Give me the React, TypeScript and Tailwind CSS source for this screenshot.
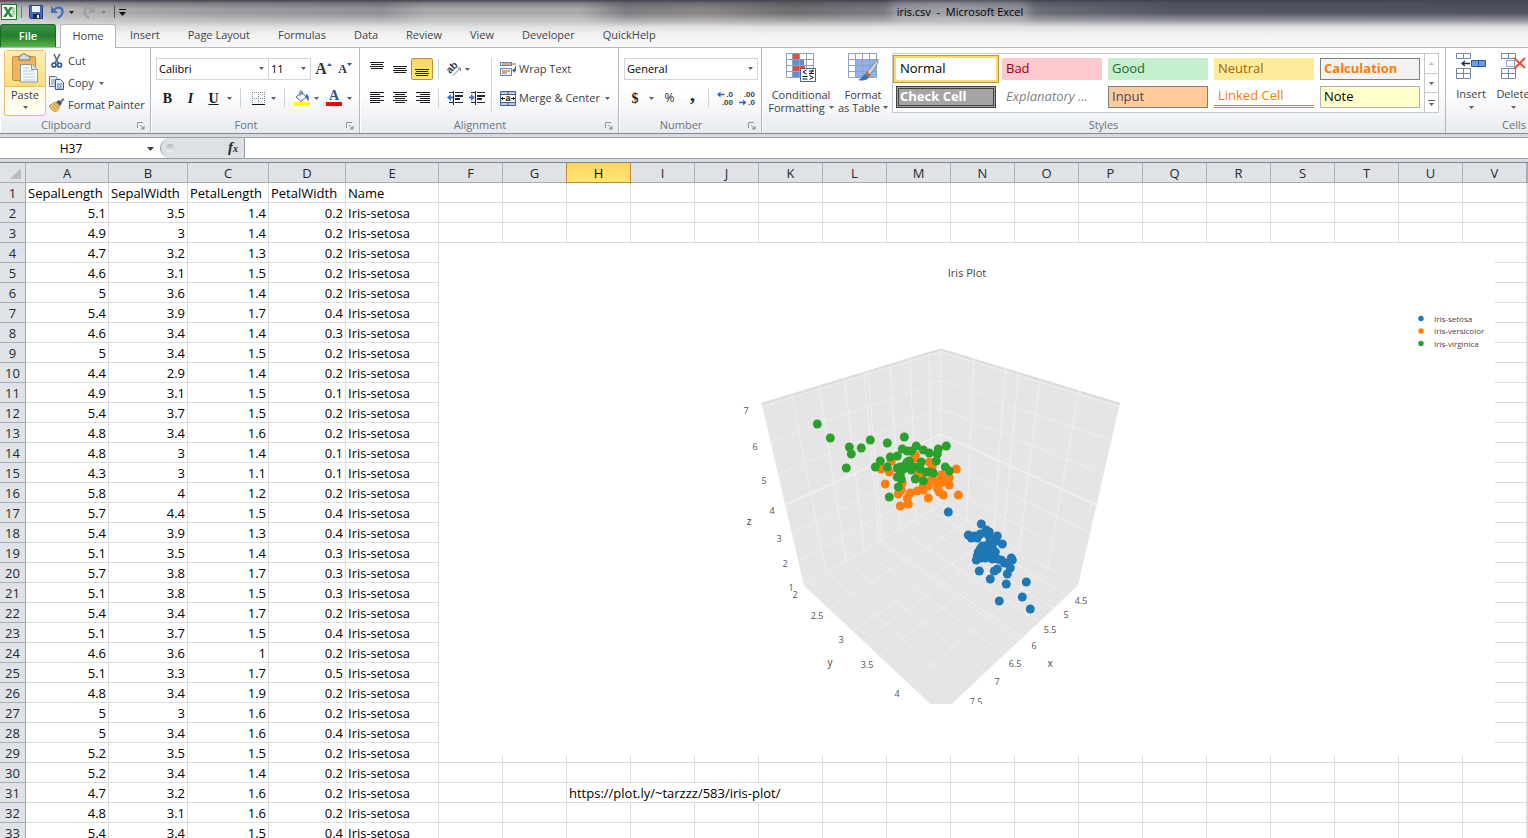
import React from 'react';
import { clsx } from 'clsx';

type IrisRow = [number, number, number, number];

const IRIS: IrisRow[] = [
  [5.1, 3.5, 1.4, 0.2],
  [4.9, 3, 1.4, 0.2],
  [4.7, 3.2, 1.3, 0.2],
  [4.6, 3.1, 1.5, 0.2],
  [5, 3.6, 1.4, 0.2],
  [5.4, 3.9, 1.7, 0.4],
  [4.6, 3.4, 1.4, 0.3],
  [5, 3.4, 1.5, 0.2],
  [4.4, 2.9, 1.4, 0.2],
  [4.9, 3.1, 1.5, 0.1],
  [5.4, 3.7, 1.5, 0.2],
  [4.8, 3.4, 1.6, 0.2],
  [4.8, 3, 1.4, 0.1],
  [4.3, 3, 1.1, 0.1],
  [5.8, 4, 1.2, 0.2],
  [5.7, 4.4, 1.5, 0.4],
  [5.4, 3.9, 1.3, 0.4],
  [5.1, 3.5, 1.4, 0.3],
  [5.7, 3.8, 1.7, 0.3],
  [5.1, 3.8, 1.5, 0.3],
  [5.4, 3.4, 1.7, 0.2],
  [5.1, 3.7, 1.5, 0.4],
  [4.6, 3.6, 1, 0.2],
  [5.1, 3.3, 1.7, 0.5],
  [4.8, 3.4, 1.9, 0.2],
  [5, 3, 1.6, 0.2],
  [5, 3.4, 1.6, 0.4],
  [5.2, 3.5, 1.5, 0.2],
  [5.2, 3.4, 1.4, 0.2],
  [4.7, 3.2, 1.6, 0.2],
  [4.8, 3.1, 1.6, 0.2],
  [5.4, 3.4, 1.5, 0.4],
];

const HEADINGS = ['SepalLength', 'SepalWidth', 'PetalLength', 'PetalWidth', 'Name'];
const LETTERS = 'ABCDEFGHIJKLMNOPQRSTUV'.split('');
const EMPTY_COLUMNS = LETTERS.slice(5);
const ACTIVE_COLUMN = 'H';
const LINK_ROW = 31;

const TABS = ['Insert', 'Page Layout', 'Formulas', 'Data', 'Review', 'View', 'Developer', 'QuickHelp'];

/* ---------- small shared pieces ---------- */

const Caret = ({ className = 'text-[#5c5f63]' }: { className?: string }) => (
  <svg width="5" height="3" viewBox="0 0 5 3" className={clsx('shrink-0', className)} aria-hidden="true">
    <path d="M0 0h5L2.500 3z" fill="currentColor" />
  </svg>
);

const Divider = () => <span className="h-5 w-px shrink-0 bg-[#d0d4d9]" />;

interface ToolProps {
  label: string;
  className?: string;
  children: React.ReactNode;
}

const Tool = ({ label, className, children }: ToolProps) => (
  <button type="button" aria-label={label} className={clsx('flex h-[22px] shrink-0 items-center justify-center', className)}>
    {children}
  </button>
);

interface ComboProps {
  label: string;
  value: string;
  className: string;
}

const Combo = ({ label, value, className }: ComboProps) => (
  <div className={clsx('relative h-[22px] shrink-0', className)}>
    <select
      aria-label={label}
      defaultValue={value}
      className="block h-full w-full appearance-none border border-[#d3d6d9] bg-white pl-[2px] text-[11px] leading-5 text-black"
    >
      <option>{value}</option>
    </select>
    <Caret className="pointer-events-none absolute right-[5px] top-[9px] text-[#5c5f63]" />
  </div>
);

interface GroupProps {
  title: string;
  className: string;
  launcher?: boolean;
  children: React.ReactNode;
}

const Group = ({ title, className, launcher = true, children }: GroupProps) => (
  <section className={clsx('flex flex-col border-r border-[#b5b9be] shadow-[inset_1px_0_0_#ffffff]', className)}>
    <div className="h-[69px]">{children}</div>
    <div className={clsx('relative flex h-4 items-center justify-center text-[11px] text-[#6a7280]', launcher && 'pr-[18px]')}>
      {title}
      {launcher && (
        <button type="button" aria-label={`${title} settings`} className="absolute right-[5px] top-[5px]">
          <svg width="8" height="8" viewBox="0 0 8 8" fill="none" stroke="#8e949b">
            <path d="M.5 6V.5H6M3 3l3 3" />
            <path d="M7.500 3.500v4h-4z" fill="#8e949b" stroke="none" />
          </svg>
        </button>
      )}
    </div>
  </section>
);

/* ---------- title bar ---------- */

const TitleBar = () => (
  <header className="flex h-6 items-center">
    <div className="flex w-[392px] shrink-0 items-center pl-[1px]">
      <svg width="16" height="16" viewBox="0 0 16 16" aria-label="Excel" role="img">
        <rect x=".5" y=".5" width="15" height="15" fill="#f4faf2" stroke="#1c7a33" />
        <path d="M11 3h3v10h-3z" fill="#d6e8d2" />
        <path d="M11 5h3M11 7.500h3M11 10h3" stroke="#7db582" />
        <path d="M2.500 3h3L7 6l2-3h3L8.500 8l3.500 5H9L7 10l-2 3H2l3.500-5z" fill="#1f8a3b" />
      </svg>
      <span className="ml-[4px] h-3 w-px bg-[#77797c]" />
      <button type="button" aria-label="Save" className="ml-[7px]">
        <svg width="14" height="14" viewBox="0 0 14 14">
          <path d="M.5.5h13v13h-12l-1-1z" fill="#4467b8" stroke="#26407f" />
          <path d="M3 1h8v6H3z" fill="#eef3fb" />
          <path d="M4 9h7v4.500H4z" fill="#1d2c57" />
          <path d="M8 10h2v3H8z" fill="#eef3fb" />
        </svg>
      </button>
      <button type="button" aria-label="Undo" className="ml-[8px] flex items-center">
        <svg width="13" height="14" viewBox="0 0 13 14" fill="none">
          <path d="M3 5c3-4 9-3 8.500 2C11.300 10 9 12 6.500 13" stroke="#3f6fc0" strokeWidth="2.200" />
          <path d="M0 1v7h7z" fill="#3f6fc0" />
        </svg>
        <Caret className="ml-[5px] text-[#1c1c1c]" />
      </button>
      <button type="button" aria-label="Redo" className="ml-[9px] flex items-center">
        <svg width="12" height="14" viewBox="0 0 12 14" fill="none">
          <path d="M9 5C6 1 1 3 1.500 7 2 10 4 12 6 13" stroke="#9b9da0" strokeWidth="2" />
          <path d="M12 1v7H5z" fill="#9b9da0" />
        </svg>
        <Caret className="ml-[6px] text-[#808285]" />
      </button>
      <span className="ml-[8px] h-3 w-px bg-[#4b4d50]" />
      <button type="button" aria-label="Customize Quick Access Toolbar" className="ml-[4px]">
        <svg width="7" height="7" viewBox="0 0 7 7">
          <path d="M0 0h7v1H0zM0 3h7L3.500 7z" fill="#111" />
        </svg>
      </button>
    </div>
    <h1 className="flex-1 text-center text-[11px] text-black">
      <span className="whitespace-pre rounded-full bg-white/20 px-1 shadow-[0_0_8px_4px_rgba(255,255,255,0.2)]">iris.csv  -  Microsoft Excel</span>
    </h1>
  </header>
);

const TabStrip = () => (
  <nav className="flex h-[23px] items-end text-[11px] text-[#3f4348]" aria-label="Ribbon tabs">
    <button
      type="button"
      className="mr-[4px] h-[23px] w-[56px] rounded-t-[3px] border border-b-0 border-[#1c6b2a] bg-linear-to-b from-[#3c9145] via-[#23802f] to-[#57b544] font-semibold text-white"
    >
      File
    </button>
    <button type="button" className="relative z-10 -mb-px h-6 w-[56px] rounded-t-[3px] border border-b-0 border-[#b4b8bc] bg-white">
      Home
    </button>
    {TABS.map((tab) => (
      <button key={tab} type="button" className="h-[23px] px-[14px]">
        {tab}
      </button>
    ))}
  </nav>
);

/* ---------- ribbon ---------- */

const ClipboardGroup = () => (
  <Group title="Clipboard" className="w-[151px] text-[11px] text-[#3b3f45]">
    <div className="flex pl-[4px] pt-[2px]">
      <button
        type="button"
        className="flex h-[66px] w-[42px] flex-col items-center rounded-[3px] border border-[#edbf5e] bg-linear-to-b from-[#fff3c4] to-[#fffdf4]"
      >
        <span className="flex h-9 w-full justify-center border-b border-[#edbf5e] bg-linear-to-b from-[#fdeeb3] to-[#fbdc7f] pt-[2px]">
          <svg width="28" height="31" viewBox="0 0 28 31">
            <rect x="1.500" y="3.500" width="23" height="24" rx="1.500" fill="#edb55c" stroke="#c98f3a" />
            <path d="M8 5V3h2c0-3 6-3 6 0h3v4H8z" fill="#d5d8dc" stroke="#6d7279" />
            <path d="M9.500 11.500h11l6 5v12.500h-17z" fill="#f7fafe" stroke="#8094b5" />
            <path d="M20.500 11.500v5h6" fill="#dbe5f3" stroke="#8094b5" />
            <path d="M12 15h6M12 18h11M12 21h12M12 24h12M12 27h12" stroke="#b9c8de" />
          </svg>
        </span>
        <span>Paste</span>
        <Caret className="mt-[2px] text-[#5c5f63]" />
      </button>
      <div className="ml-[3px] flex flex-col">
        <button type="button" className="flex h-[22px] items-center">
          <svg width="16" height="16" viewBox="0 0 16 16" className="mr-[3px]" fill="none">
            <path d="M5 1l4 9M11 1L6 10" stroke="#5a6b86" strokeWidth="1.600" />
            <circle cx="5" cy="12" r="2" stroke="#2c58a8" strokeWidth="1.700" />
            <circle cx="10.500" cy="12" r="2" stroke="#2c58a8" strokeWidth="1.700" />
          </svg>
          Cut
        </button>
        <button type="button" className="flex h-[22px] items-center">
          <svg width="16" height="14" viewBox="0 0 16 14" className="mr-[3px]">
            <path d="M.5.500h6l2 2v8H.500z" fill="#e9f0fa" stroke="#4e70a8" />
            <path d="M2 4h4M2 6h4M2 8h4" stroke="#6d8fc6" />
            <path d="M6.500 3.500h5l3 3v7h-8z" fill="#e9f0fa" stroke="#34558f" />
            <path d="M8 8h5M8 10h5M8 12h5" stroke="#4b78c4" />
          </svg>
          Copy
          <Caret className="ml-[5px] text-[#5c5f63]" />
        </button>
        <button type="button" className="flex h-[22px] items-center whitespace-nowrap">
          <svg width="16" height="14" viewBox="0 0 16 14" className="mr-[3px]">
            <path d="M0 8l6-4 5 5-4 5c-3 0-5-3-7-6z" fill="#edc25e" stroke="#b98525" strokeWidth=".7" />
            <path d="M3 8l4 4M5 6l4 4" stroke="#c98f3a" />
            <path d="M7 4l3-2 3 3-2 3z" fill="#4c4f55" />
            <path d="M11 3l3-3 1.500 1.500-3 3z" fill="#6d7279" />
          </svg>
          Format Painter
        </button>
      </div>
    </div>
  </Group>
);

const FontGroup = () => (
  <Group title="Font" className="w-[209px]">
    <div className="flex flex-col gap-[7px] pl-[5px] pt-[10px]">
      <div className="flex h-[22px]">
        <Combo label="Font" value="Calibri" className="w-[113px]" />
        <Combo label="Font size" value="11" className="-ml-px w-[43px]" />
        <Tool label="Increase font size" className="ml-[4px] w-[17px] font-['Liberation_Serif'] text-[16px] font-bold text-[#33363b]">
          A
          <svg width="5" height="3" viewBox="0 0 5 3" className="mb-[10px]"><path d="M0 3h5L2.500 0z" fill="#2c58a8" /></svg>
        </Tool>
        <Tool label="Decrease font size" className="ml-[5px] w-[16px] font-['Liberation_Serif'] text-[12px] font-bold text-[#33363b]">
          A
          <svg width="5" height="3" viewBox="0 0 5 3" className="mb-[9px]"><path d="M0 0h5L2.500 3z" fill="#2c58a8" /></svg>
        </Tool>
      </div>
      <div className="flex h-[22px] items-center font-['Liberation_Serif'] text-[14px] text-[#17191c]">
        <Tool label="Bold" className="w-[23px] font-bold">B</Tool>
        <Tool label="Italic" className="w-[23px] font-bold italic">I</Tool>
        <Tool label="Underline" className="w-[23px] font-bold underline">U</Tool>
        <Tool label="Underline style" className="w-[9px]"><Caret /></Tool>
        <span className="w-[6px]" />
        <Divider />
        <Tool label="Borders" className="ml-[10px] w-[14px]">
          <svg width="13" height="13" viewBox="0 0 13 13" fill="none">
            <path d="M.5 0v12M6.500 0v12M12.500 0v12M0 .5h13M0 6.500h13" stroke="#7d828a" strokeDasharray="1 1" />
            <path d="M0 12.500h13" stroke="#111" />
          </svg>
        </Tool>
        <Tool label="Border style" className="ml-[5px] w-[7px]"><Caret /></Tool>
        <span className="w-[7px]" />
        <Divider />
        <Tool label="Fill color" className="ml-[8px] w-[17px]">
          <svg width="16" height="16" viewBox="0 0 16 16">
            <path d="M2 7l6-5 4 5-5 4.500z" fill="#f1f5fa" stroke="#5b6f8e" />
            <path d="M6 6V1.500c0-1 2-1 2 0V5" fill="none" stroke="#5b6f8e" />
            <path d="M12 4c3 1 3 4 2.500 7-1.500-1-2.500-3-2.500-4z" fill="#3466b4" />
            <path d="M0 12h16v4H0z" fill="#ffff00" />
          </svg>
        </Tool>
        <Tool label="Fill color list" className="ml-[3px] w-[7px]"><Caret /></Tool>
        <Tool label="Font color" className="ml-[6px] w-[16px] flex-col font-bold text-[#2d4f96]">
          <span className="h-3 leading-3">A</span>
          <span className="h-1 w-4 bg-[#ff0000]" />
        </Tool>
        <Tool label="Font color list" className="ml-[4px] w-[7px]"><Caret /></Tool>
      </div>
    </div>
  </Group>
);

// Six text rules; every second one is short and shifted according to the alignment.
const Lines = ({ align, short }: { align: 'left' | 'center' | 'right'; short: number }) => {
  const x = align === 'left' ? 0 : align === 'right' ? 14 - short : (14 - short) / 2;
  return (
    <svg width="14" height="12" viewBox="0 0 14 12" fill="#1b1d20">
      <path d="M0 0h14v1H0zM0 4h14v1H0zM0 8h14v1H0z" />
      <rect x={x} y="2" width={short} height="1" />
      <rect x={x} y="6" width={short} height="1" />
      <rect x={x} y="10" width={short} height="1" />
    </svg>
  );
};

const VLines = ({ y }: { y: number }) => (
  <svg width="14" height="16" viewBox="0 0 14 16" fill="#1b1d20">
    <rect x="0" y={y} width="14" height="1" />
    <rect x="1" y={y + 2} width="12" height="1" />
    <rect x="0" y={y + 4} width="14" height="1" />
    <rect x="1" y={y + 6} width="12" height="1" />
  </svg>
);

const IndentIcon = ({ outward }: { outward?: boolean }) => (
  <svg width="16" height="14" viewBox="0 0 16 14">
    <path d="M2 1h5v1H2zM8 1h8v1H8zM8 4h8v2H8zM8 7h5v2H8zM2 11h5v1H2zM8 11h8v1H8zM6 0h1v14H6z" fill="#26282c" />
    {outward ? (
      <path d="M0 6.500L4 3v2.500h2v2H4V10z" fill="#3c74c8" />
    ) : (
      <path d="M6 6.500L2 3v2.500H0v2h2V10z" fill="#3c74c8" />
    )}
  </svg>
);

const AlignmentGroup = () => (
  <Group title="Alignment" className="w-[259px] text-[11px] text-[#3b3f45]">
    <div className="flex pl-[5px] pt-[10px]">
      <div className="flex flex-col gap-[7px]">
        <div className="flex items-center">
          <Tool label="Top align" className="w-[23px]"><VLines y={1} /></Tool>
          <Tool label="Middle align" className="w-[23px]"><VLines y={5} /></Tool>
          <Tool label="Bottom align" className="w-[22px] rounded-[2px] border border-[#c29133] bg-linear-to-b from-[#fbd469] to-[#ffe87d]">
            <VLines y={8} />
          </Tool>
        </div>
        <div className="flex items-center">
          <Tool label="Align left" className="w-[23px]"><Lines align="left" short={10} /></Tool>
          <Tool label="Center" className="w-[23px]"><Lines align="center" short={10} /></Tool>
          <Tool label="Align right" className="w-[23px]"><Lines align="right" short={10} /></Tool>
        </div>
      </div>
      <div className="flex flex-col gap-[7px] pl-[4px]">
        <div className="flex h-[22px] items-center">
          <Divider />
          <Tool label="Orientation" className="ml-[7px] gap-[3px]">
            <svg width="16" height="16" viewBox="0 0 16 16" className="overflow-visible">
              <text transform="translate(4 13) rotate(-45)" className="font-['Liberation_Sans'] text-[10px] font-bold" fill="#33363b">ab</text>
              <path d="M7 14.500L14.500 7M11.500 7h3v3" fill="none" stroke="#7d828a" />
            </svg>
            <Caret />
          </Tool>
        </div>
        <div className="flex h-[22px] items-center">
          <Divider />
          <Tool label="Decrease indent" className="ml-[8px]"><IndentIcon outward /></Tool>
          <Tool label="Increase indent" className="ml-[6px]"><IndentIcon /></Tool>
        </div>
      </div>
      <span className="ml-[6px] h-[54px] w-px bg-[#d0d4d9]" />
      <div className="flex flex-col gap-[7px] pl-[8px]">
        <button type="button" className="flex h-[22px] items-center whitespace-nowrap">
          <svg width="16" height="16" viewBox="0 0 16 16" className="mr-[3px]">
            <path d="M.5 1.500h11M.5 4.500h11M.5 1v4M11.500 1v4" fill="none" stroke="#6681ad" />
            <path d="M2 3h14" stroke="#b0573a" />
            <path d="M.5 7.500h11v7H.500z" fill="#eef3fa" stroke="#6681ad" />
            <path d="M2 10h8M2 12h5" stroke="#b0573a" />
            <path d="M15.500 5v5" stroke="#3466b4" />
            <path d="M12 9.500L15 7v5z" fill="#3466b4" />
          </svg>
          Wrap Text
        </button>
        <button type="button" className="flex h-[22px] items-center whitespace-nowrap">
          <svg width="16" height="15" viewBox="0 0 16 15" className="mr-[3px]">
            <path d="M.5.500h15v14H.500z" fill="#b9cbe6" stroke="#44618f" />
            <path d="M0 3.500h16M0 11.500h16M8 0v4M8 11v4" stroke="#44618f" />
            <path d="M1 4h14v7H1z" fill="#fff" />
            <path d="M1 7.500h4M15 7.500h-4M3 6l-1.500 1.500L3 9M13 6l1.500 1.500L13 9" fill="none" stroke="#26282c" />
            <text x="5.500" y="10" className="font-['Liberation_Sans'] text-[9px] font-bold" fill="#111">a</text>
          </svg>
          Merge &amp; Center
          <Caret className="ml-[5px] text-[#5c5f63]" />
        </button>
      </div>
    </div>
  </Group>
);

const DecimalIcon = ({ increase }: { increase?: boolean }) => (
  <svg
    width="16"
    height="15"
    viewBox="0 0 16 15"
    className="overflow-visible font-['Liberation_Sans'] text-[8px] font-bold"
    fill="#3b3f45"
  >
    <text x="16" y="6" textAnchor="end">{increase ? '.0' : '.00'}</text>
    <text x="16" y="14" textAnchor="end">{increase ? '.00' : '.0'}</text>
    {increase ? (
      <path d="M0 3.500L3.500.5v2.200h4v1.600h-4v2.200z" fill="#3466b4" />
    ) : (
      <path d="M7.500 11.500L4 8.500v2.200H0v1.600h4v2.200z" fill="#3466b4" />
    )}
  </svg>
);

const NumberGroup = () => (
  <Group title="Number" className="w-[143px]">
    <div className="flex flex-col gap-[7px] pl-[5px] pt-[10px]">
      <Combo label="Number format" value="General" className="w-[134px]" />
      <div className="flex h-[22px] items-center text-[12px] text-[#26282c]">
        <Tool label="Accounting format" className="w-[22px] font-['Liberation_Serif'] text-[14px] font-bold">$</Tool>
        <Tool label="Currency list" className="w-[10px]"><Caret /></Tool>
        <Tool label="Percent style" className="ml-[2px] w-[23px]">%</Tool>
        <Tool label="Comma style" className="w-[23px] pb-2 font-['Liberation_Serif'] text-[20px] font-bold">,</Tool>
        <span className="w-[4px]" />
        <Divider />
        <Tool label="Increase decimal" className="ml-[8px]"><DecimalIcon increase /></Tool>
        <Tool label="Decrease decimal" className="ml-[6px]"><DecimalIcon /></Tool>
      </div>
    </div>
  </Group>
);

const STYLE_CELLS = [
  { name: 'Normal', className: 'bg-white pl-[4px] text-black outline-2 outline-[#fbdc68] ring-3 ring-[#c2953d]' },
  { name: 'Bad', className: 'bg-[#ffc7ce] pl-[4px] text-[#9c0006]' },
  { name: 'Good', className: 'bg-[#c6efce] pl-[4px] text-[#1b6b1f]' },
  { name: 'Neutral', className: 'bg-[#ffeb9c] pl-[4px] text-[#9c6500]' },
  { name: 'Calculation', className: 'border border-[#7f7f7f] bg-[#f2f2f2] pl-[3px] font-bold text-[#fa7d00]' },
  { name: 'Check Cell', className: 'border-3 border-double border-[#3f3f3f] bg-[#a5a5a5] pl-[1px] font-bold text-white' },
  { name: 'Explanatory ...', className: 'pl-[4px] italic text-[#7f7f7f]' },
  { name: 'Input', className: 'border border-[#7f7f7f] bg-[#ffcc99] pl-[3px] text-[#3f3f76]' },
  { name: 'Linked Cell', className: 'border-b-3 border-double border-[#ff8001] pl-[4px] text-[#fa7d00]' },
  { name: 'Note', className: 'border border-[#b2b2b2] bg-[#ffffcc] pl-[3px] text-black' },
];

const StylesGroup = () => (
  <Group title="Styles" launcher={false} className="w-[684px] text-[11px] text-[#3b3f45]">
    <div className="flex pt-[5px]">
      <button type="button" className="flex w-[78px] flex-col items-center leading-[13px]">
        <svg width="32" height="30" viewBox="0 0 32 30" className="mb-[5px]">
          <path d="M1 .500h28v24H1z" fill="#fff" />
          <path d="M8 1h6v5H8z" fill="#e84a35" />
          <path d="M8 7h11v5H8z" fill="#5b8fe0" />
          <path d="M8 13h12v5H8z" fill="#e84a35" />
          <path d="M8 19h6v5H8z" fill="#5b8fe0" />
          <path d="M1.500.5h27v24h-27zM1 6.500h27M1 12.500h27M1 18.500h27M7.500 0v25M14.500 0v25M21.500 0v25" fill="none" stroke="#8fa1be" />
          <path d="M15.500 15.500h15v13h-15z" fill="#fff" stroke="#4c6288" />
          <path d="M21.500 17L18 19l3.500 2M17.500 23.500h5M17.500 26h5M24 18h5M24 20.500h5M28 16.500l-3 5M24.500 22.500l4 2-4 2" fill="none" stroke="#111" />
        </svg>
        <span className="whitespace-nowrap">Conditional</span>
        <span className="flex items-center gap-[4px] whitespace-nowrap">Formatting <Caret /></span>
      </button>
      <button type="button" className="flex w-[46px] flex-col items-center leading-[13px]">
        <svg width="32" height="30" viewBox="0 0 32 30" className="mb-[5px]">
          <path d="M1.500.5h28v24h-28z" fill="#fff" />
          <path d="M8 7h21v18H8z" fill="#8db2f0" />
          <path d="M1.500.5h28v24h-28zM1 6.500h28M1 12.500h28M1 18.500h28M8.500 0v25M15.500 0v25M22.500 0v25" fill="none" stroke="#8fa1be" />
          <path d="M31 6L20 19l3 3 8-12z" fill="#cfd2d6" stroke="#7b7f85" strokeWidth=".8" />
          <path d="M20 18l4 4-3 2-3-3z" fill="#b8773a" />
          <path d="M18 21l4 3c-2 4-7 4-11 3 3-1 4-4 7-6z" fill="#3f6fc0" />
        </svg>
        <span className="whitespace-nowrap">Format</span>
        <span className="flex items-center gap-[3px] whitespace-nowrap">as Table <Caret /></span>
      </button>
      <div className="ml-[6px] flex h-[60px] border border-[#c3c8cd] bg-white">
        <div className="grid grid-cols-5 content-start gap-[6px] pl-[3px] pr-[4px] pt-[4px] text-[13px]">
          {STYLE_CELLS.map((cell) => (
            <button
              key={cell.name}
              type="button"
              className={clsx('flex h-[22px] w-[100px] items-center whitespace-nowrap text-left', cell.className)}
            >
              {cell.name}
            </button>
          ))}
        </div>
        <div className="flex w-[14px] flex-col divide-y divide-[#c3c8cd] border-l border-[#c3c8cd]">
          <button type="button" aria-label="Previous styles" className="flex flex-1 items-center justify-center">
            <Caret className="rotate-180 text-[#b9bdc2]" />
          </button>
          <button type="button" aria-label="Next styles" className="flex flex-1 items-center justify-center">
            <Caret />
          </button>
          <button type="button" aria-label="More styles" className="flex flex-1 flex-col items-center justify-center gap-[2px]">
            <span className="h-px w-[7px] bg-[#5c5f63]" />
            <Caret />
          </button>
        </div>
      </div>
    </div>
  </Group>
);

const CellsGroup = () => (
  <section className="min-w-0 flex-1 overflow-hidden text-[11px]">
    <div className="flex w-[136px] flex-col">
      <div className="flex h-[69px] pt-[5px] text-[#3b3f45]">
        <button type="button" className="flex w-[50px] flex-col items-center">
          <svg width="32" height="30" viewBox="0 0 32 30" className="mb-[3px]">
            <path d="M1.500.5h14v5h-14zM8.500 0v6M1.500 15.500h14v10h-14zM1 20.500h15M8.500 15v11" fill="#fff" stroke="#7388ab" />
            <path d="M16.500 7.500h14v6h-14z" fill="#6f9be8" stroke="#2f57a5" />
            <path d="M23.500 8v6" stroke="#2f57a5" />
            <path d="M7 10.500h8M10 8l-3 2.500L10 13" fill="none" stroke="#1d2c57" strokeWidth="1.300" />
          </svg>
          Insert
          <Caret className="mt-[3px] text-[#5c5f63]" />
        </button>
        <button type="button" className="flex w-[34px] flex-col items-center">
          <svg width="26" height="30" viewBox="0 0 26 30" className="mb-[3px]">
            <path d="M1.500.5h14v5h-14zM8.500 0v6M1.500 15.500h14v10h-14zM1 20.500h15M8.500 15v11" fill="#fff" stroke="#7388ab" />
            <path d="M6.500 7.500h8v6h-8z" fill="none" stroke="#2f57a5" strokeDasharray="1 1" />
            <path d="M14 5l11 10M25 5L14 16" stroke="#ee4a38" strokeWidth="2" />
          </svg>
          Delete
          <Caret className="mt-[3px] text-[#5c5f63]" />
        </button>
      </div>
      <div className="flex h-4 items-center justify-center text-[#6a7280]">Cells</div>
    </div>
  </section>
);

const FormulaBar = () => (
  <div className="border-b border-[#7f858c] bg-[#d5dae0] pb-[3px] pt-[3px]">
    <div className="flex h-[22px] items-stretch border-y border-[#9a9fa5] bg-white">
      <div className="relative w-[160px]">
        <input
          aria-label="Name Box"
          defaultValue="H37"
          className="block h-full w-full bg-white pr-[18px] text-center text-[12px] leading-5 text-black"
        />
        <svg width="7" height="4" viewBox="0 0 7 4" className="absolute right-[6px] top-[9px]">
          <path d="M0 0h7L3.500 4z" fill="#3b3f45" />
        </svg>
      </div>
      <div className="flex w-[85px] items-center justify-between rounded-l-full border-x border-[#9a9fa5] bg-[#dde1e6] pl-[5px] pr-[6px]">
        <span className="size-2 rounded-full bg-linear-to-b from-[#b3b6ba] to-[#f3f4f5]" />
        <button
          type="button"
          aria-label="Insert function"
          className="font-['Liberation_Serif'] text-[15px] font-bold italic leading-4 text-[#26282c]"
        >
          f<span className="text-[10px]">x</span>
        </button>
      </div>
      <input aria-label="Formula" className="min-w-0 flex-1 bg-white" />
    </div>
  </div>
);

/* ---------- chart ---------- */

const SETOSA: [number, number][] = [
  [948, 512], [981, 524], [968, 535], [971, 538], [974, 536], [977, 538], [980, 534], [986, 530], [989, 532],
  [988, 535], [997, 536], [1002, 544], [995, 541], [990, 539], [982, 546], [980, 549], [978, 552], [977, 556],
  [976, 560], [985, 548], [990, 549], [995, 552], [983, 555], [988, 556], [993, 557], [985, 558], [992, 559],
  [997, 559], [1001, 560], [1004, 563], [1007, 563], [1011, 558], [1012, 560], [1010, 568], [1007, 574],
  [1006, 584], [997, 569], [994, 571], [990, 579], [979, 571], [1026, 582], [1022, 597], [999, 601], [1030, 609],
  [987, 545], [992, 546], [986, 552], [981, 558],
];

const VERSICOLOR: [number, number][] = [
  [956, 469], [885, 484], [958, 495], [928, 498], [900, 506], [908, 504], [907, 498], [910, 493], [898, 494],
  [901, 490], [902, 483], [917, 491], [923, 490], [923, 486], [930, 481], [935, 481], [941, 475], [949, 478],
  [949, 485], [943, 482], [938, 485], [937, 488], [939, 492], [943, 495], [929, 462], [932, 466], [915, 455],
  [914, 458], [881, 469], [889, 472], [891, 461], [918, 475], [922, 474], [928, 486],
];

const VIRGINICA: [number, number][] = [
  [817, 424], [830, 438], [849, 447], [851, 454], [846, 468], [861, 448], [870, 440], [887, 443], [904, 437],
  [916, 446], [902, 449], [907, 451], [911, 451], [923, 450], [929, 453], [938, 449], [946, 446], [937, 454],
  [936, 461], [945, 467], [949, 471], [890, 457], [897, 456], [880, 461], [875, 467], [887, 467], [909, 461],
  [907, 462], [921, 462], [897, 468], [900, 467], [903, 469], [905, 465], [908, 467], [911, 470], [920, 469],
  [926, 472], [929, 472], [933, 473], [897, 477], [901, 479], [900, 474], [915, 479], [923, 481], [898, 487],
  [889, 497], [914, 467],
];

const SERIES = [
  { name: 'Iris-setosa', color: '#1f77b4', points: SETOSA },
  { name: 'Iris-versicolor', color: '#ff7f0e', points: VERSICOLOR },
  { name: 'Iris-virginica', color: '#2ca02c', points: VIRGINICA },
];

const TICKS: [string, number, number][] = [
  ['7', 746, 411], ['6', 755, 447], ['5', 764, 481], ['4', 772, 511], ['3', 779, 539], ['2', 785, 564], ['1', 791, 588],
  ['2', 795, 595], ['2.5', 817, 616], ['3', 841, 640], ['3.5', 867, 665], ['4', 897, 694],
  ['4.5', 1081, 601], ['5', 1066, 615], ['5.5', 1050, 630], ['6', 1034, 646], ['6.5', 1015, 664], ['7', 997, 682],
  ['7.5', 976, 702],
];

const AXES: [string, number, number][] = [['z', 749, 522], ['y', 830, 663], ['x', 1050, 664]];

const IrisPlot = () => (
  <svg
    width="1056"
    height="512"
    viewBox="439 244 1056 512"
    className="absolute left-[439px] top-[81px] bg-white font-['Open_Sans']"
    role="img"
    aria-label="Iris Plot"
  >
    <clipPath id="scene"><path d="M700 330h500v374H700z" /></clipPath>
    <text x="967" y="277" textAnchor="middle" fill="#444" className="text-[11px]">Iris Plot</text>
    <g clipPath="url(#scene)">
      <path d="M940.700 348.500L1120 403L1078 585.500L941 714L804 585.500L761.500 403z" fill="#e5e5e5" />
      <path d="M762 404L940.700 349.500L1120 404" fill="none" stroke="#dcdcdc" strokeWidth="2" />
      <g fill="none" stroke="#efefef">
        <path d="M762.500 406.500L940.700 351.500L1119.500 406.500M770.700 441L940.700 380.700L1111.700 441M778.500 474L940.700 408.300L1104 474" />
        <path d="M785 505L940.700 434.300L1096.700 505" strokeWidth="2" />
        <path d="M793 532.700L940.700 460L1090 532.700M798 560.700L940.700 483L1084 560.700M804 585.500L940.700 505L1078 585.500M940.700 349V505" />
        <path d="M791.700 393.300L825.700 571.700L964 692.300M819 385L846 561.700L984.300 672.300M844.300 378.300L864.300 550.700L1004 654M864 371.700L879.300 541.700L1018.300 640M867.700 370.700L882.300 541.700L1021.700 636.700M890 363.300L900 530L1038.300 621.700M910.300 357.700L916 521.700L1053.300 608.300M929.300 352.700L931.700 511L1067 596" />
        <path d="M974 358.300L966.700 521.700L829.300 608.300M1005.300 367.700L993.300 536L853.300 630.700M1018.300 372L1003 541L864 640M1040 379L1019 550L880 655.700M1079 390.700L1047.700 568.300L910 683.300" />
      </g>
      <g textAnchor="middle" fill="#555" className="text-[9px]">
        {TICKS.map(([label, x, y]) => (
          <text key={`${label}-${x}`} x={x} y={y + 3}>{label}</text>
        ))}
      </g>
      <g textAnchor="middle" fill="#444" className="text-[10px]">
        {AXES.map(([label, x, y]) => (
          <text key={label} x={x} y={y + 3}>{label}</text>
        ))}
      </g>
      {[SERIES[1], SERIES[0], SERIES[2]].map((s) => (
        <g key={s.name} fill={s.color}>
          {s.points.map(([x, y], i) => <circle key={i} cx={x + 0.3} cy={y} r="4.500" />)}
        </g>
      ))}
    </g>
    {SERIES.map((s, i) => (
      <g key={s.name}>
        <circle cx="1421" cy={318.5 + i * 12.5} r="2.700" fill={s.color} />
        <text x="1434" y={321.5 + i * 12.5} fill="#444" className="text-[8px]">{s.name}</text>
      </g>
    ))}
  </svg>
);

/* ---------- sheet ---------- */

const CELL = 'border-b border-r border-[#dadcdd] p-0 align-bottom whitespace-nowrap';
const HEAD = 'border-b border-r border-[#a9adb3] bg-[#dfe3e8] p-0 text-center align-bottom font-normal text-[#26282c]';

const DataCells = ({ row }: { row: number }) => {
  if (row === 1) {
    return HEADINGS.map((h) => <td key={h} className={clsx(CELL, 'pl-[2px]')}>{h}</td>);
  }
  const values = IRIS[row - 2];
  return (
    <>
      {values.map((v, i) => <td key={i} className={clsx(CELL, 'pr-[2px] text-right')}>{v}</td>)}
      <td className={clsx(CELL, 'pl-[2px]')}>Iris-setosa</td>
    </>
  );
};

const Sheet = () => (
  <main className="relative min-h-0 flex-1 overflow-hidden bg-white">
    <table className="w-full table-fixed border-separate border-spacing-0 font-['Open_Sans'] text-[13px] leading-[17px] text-black">
      <colgroup>
        <col className="w-[26px]" />
        <col className="w-[83px]" />
        <col className="w-[79px]" />
        <col className="w-[81px]" />
        <col className="w-[77px]" />
        <col className="w-[93px]" />
        {EMPTY_COLUMNS.map((c) => <col key={c} className="w-[64px]" />)}
        <col />
      </colgroup>
      <thead>
        <tr className="h-5">
          <th className={HEAD} aria-label="Select all">
            <svg width="11" height="11" viewBox="0 0 11 11" className="mb-[3px] ml-auto mr-[4px]"><path d="M11 0v11H0z" fill="#b9bdc2" /></svg>
          </th>
          {LETTERS.map((c) => (
            <th
              key={c}
              scope="col"
              className={
                c === ACTIVE_COLUMN
                  ? 'border-b border-r border-[#c0893a] bg-linear-to-b from-[#fdd35c] to-[#ffe775] p-0 text-center align-bottom font-normal shadow-[-1px_0_0_#c0893a]'
                  : HEAD
              }
            >
              {c}
            </th>
          ))}
          <th className={HEAD} />
        </tr>
      </thead>
      <tbody>
        {Array.from({ length: 33 }, (_, i) => i + 1).map((row) => (
          <tr key={row} className="h-5">
            <th scope="row" className={HEAD}>{row}</th>
            <DataCells row={row} />
            {row === LINK_ROW ? (
              <>
                <td className={CELL} />
                <td className={CELL} />
                <td className={clsx(CELL, 'pl-[2px]')} colSpan={4}>https://plot.ly/~tarzzz/583/iris-plot/</td>
                {EMPTY_COLUMNS.slice(6).map((c) => <td key={c} className={CELL} />)}
              </>
            ) : (
              EMPTY_COLUMNS.map((c) => <td key={c} className={CELL} />)
            )}
            <td className={CELL} />
          </tr>
        ))}
      </tbody>
    </table>
    <IrisPlot />
  </main>
);

export default function App() {
  return (
    <div className="flex h-screen flex-col overflow-hidden bg-white font-['Open_Sans',sans-serif]">
      <div className="bg-[linear-gradient(to_right,#c2c3c4_0%,#a9aaac_8%,#9c9da0_14%,#8f9094_25%,#a9aaac_28%,#a9a9aa_38%,#7c7d82_41%,#8a8583_46%,#6f6d70_52%,#77787e_57%,#85878e_62%,#666873_69%,#545663_77%,#50525f_100%)]">
        <div className="bg-[linear-gradient(to_bottom,#42434f_0px,rgba(66,67,79,0.4)_3px,rgba(66,67,79,0)_9px,rgba(225,225,226,0)_13px,rgba(225,225,226,0.5)_21px,#e0e1e2_27px,#f2f2f2_35px,#f9f9f9_47px)]">
          <TitleBar />
          <TabStrip />
        </div>
      </div>
      <div className="flex border-b border-t border-b-[#84898f] border-t-[#b4b8bc] bg-linear-to-b from-white via-white via-50% to-[#e7ebef]">
        <ClipboardGroup />
        <FontGroup />
        <AlignmentGroup />
        <NumberGroup />
        <StylesGroup />
        <CellsGroup />
      </div>
      <FormulaBar />
      <Sheet />
    </div>
  );
}
